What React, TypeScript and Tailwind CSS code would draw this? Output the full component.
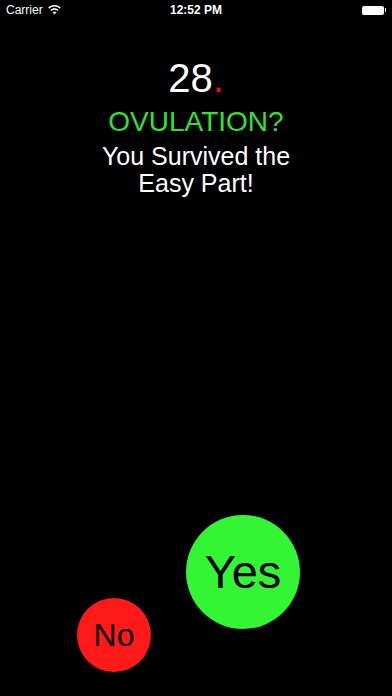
import React from 'react';

const font = { fontFamily: '"Liberation Sans", Arial, sans-serif' };

const StatusBar: React.FC = () => (
  <div className="relative flex h-[20px] items-center justify-between px-[6px] text-[12px] text-white">
    <div className="flex items-center gap-[5px]">
      <span>Carrier</span>
      <svg width="13" height="10" viewBox="0 0 13 10" fill="white">
        <path d="M6.5 0C4 0 1.8 1 0.2 2.6l1.1 1.1C2.6 2.4 4.5 1.6 6.5 1.6s3.9.8 5.2 2.1l1.1-1.1C11.2 1 9 0 6.5 0z" />
        <path d="M6.5 3.2c-1.6 0-3 .6-4.1 1.7l1.1 1.1c.8-.8 1.8-1.2 3-1.2s2.2.4 3 1.2l1.1-1.1C9.5 3.8 8.1 3.2 6.5 3.2z" />
        <path d="M6.5 6.4c-.8 0-1.4.3-2 .8L6.5 9.4l2-2.2c-.6-.5-1.2-.8-2-.8z" />
      </svg>
    </div>
    <span className="absolute left-1/2 -translate-x-1/2 font-semibold">12:52 PM</span>
    <div className="flex items-center">
      <div className="h-[9px] w-[22px] rounded-[2px] bg-white" />
      <div className="ml-[1px] h-[4px] w-[1.5px] bg-white" />
    </div>
  </div>
);

const App: React.FC = () => {
  return (
    <div className="flex h-[696px] w-[392px] flex-col bg-black" style={font}>
      <StatusBar />
      <div className="mt-[38px] flex flex-col items-center text-center">
        <div className="text-[40px] leading-[40px] text-white">
          28<span className="text-[#e0141a]">.</span>
        </div>
        <div className="mt-[10px] text-[28px] leading-[28px] text-[#33e133]">OVULATION?</div>
        <div className="mt-[7px] text-[25px] leading-[27px] text-white">
          You Survived the
          <br />
          Easy Part!
        </div>
      </div>
      <div className="mt-auto flex items-end pl-[77px]">
        <button className="mb-[24px] flex h-[74px] w-[74px] items-center justify-center rounded-full bg-[#ff1a1a] text-[32px] text-black">
          No
        </button>
        <button className="mb-[67px] ml-[35px] flex h-[114px] w-[114px] items-center justify-center rounded-full bg-[#33f533] text-[47px] text-black">
          Yes
        </button>
      </div>
    </div>
  );
};

export default App;
